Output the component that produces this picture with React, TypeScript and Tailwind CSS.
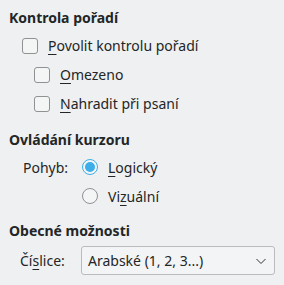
import React from "react";

function Checkbox() {
  return (
    <span className="box-border block h-4 w-4 shrink-0 rounded-[3px] border border-[#8f9192] bg-[#f4f5f5]" />
  );
}

function Radio({ checked }: { checked?: boolean }) {
  return checked ? (
    <span className="box-border flex h-4 w-4 shrink-0 items-center justify-center rounded-full border border-[#3daee9] bg-[#f4f5f5]">
      <span className="block h-[10px] w-[10px] rounded-full bg-[#3daee9]" />
    </span>
  ) : (
    <span className="box-border block h-4 w-4 shrink-0 rounded-full border border-[#8f9192] bg-[#f4f5f5]" />
  );
}

function Mn({ children }: { children: React.ReactNode }) {
  return <span className="underline decoration-1 underline-offset-[3px]">{children}</span>;
}

export default function App() {
  return (
    <main
      className="flex h-[285px] w-[284px] flex-col bg-[#eff0f1] pt-[6px] text-[14px] text-[#232627]"
      style={{ fontFamily: '"Noto Sans", "DejaVu Sans", sans-serif' }}
    >
      <h2 className="mb-[3px] flex h-[22px] items-center pl-[9px] font-bold">Kontrola pořadí</h2>
      <div className="flex flex-col">
        <label className="flex h-[29px] items-center gap-[10px] pl-[22px]">
          <Checkbox />
          <span>
            <Mn>P</Mn>ovolit kontrolu pořadí
          </span>
        </label>
        <label className="flex h-[29px] items-center gap-[10px] pl-[34px]">
          <Checkbox />
          <span>
            <Mn>O</Mn>mezeno
          </span>
        </label>
        <label className="flex h-[29px] items-center gap-[10px] pl-[34px]">
          <Checkbox />
          <span>
            <Mn>N</Mn>ahradit při psaní
          </span>
        </label>
      </div>

      <h2 className="mt-[10px] flex h-[22px] items-center pl-[9px] font-bold">Ovládání kurzoru</h2>
      <div className="mt-[3px] grid grid-cols-[82px_1fr]">
        <span className="flex h-[28px] items-center pl-[23px]">Pohyb:</span>
        <label className="flex h-[28px] items-center gap-[10px]">
          <Radio checked />
          <span>
            <Mn>L</Mn>ogický
          </span>
        </label>
        <span />
        <label className="mt-[1px] flex h-[28px] items-center gap-[10px]">
          <Radio />
          <span>
            Vi<Mn>z</Mn>uální
          </span>
        </label>
      </div>

      <h2 className="mt-[9px] flex h-[22px] items-center pl-[9px] font-bold">Obecné možnosti</h2>
      <div className="mt-[5px] flex items-center">
        <span className="w-[81px] pl-[20px]">
          Čí<Mn>s</Mn>lice:
        </span>
        <div className="box-border flex h-[29px] w-[194px] items-center justify-between rounded-[3px] border border-[#b9bbbd] bg-[#f3f4f5] pl-[6px] pr-[6px]">
          <span>Arabské (1, 2, 3...)</span>
          <svg width="12" height="12" viewBox="0 0 12 12" className="mr-[1px]">
            <path d="M1.5 4 L6 8.5 L10.5 4" fill="none" stroke="#31363b" strokeWidth="1" />
          </svg>
        </div>
      </div>
    </main>
  );
}
